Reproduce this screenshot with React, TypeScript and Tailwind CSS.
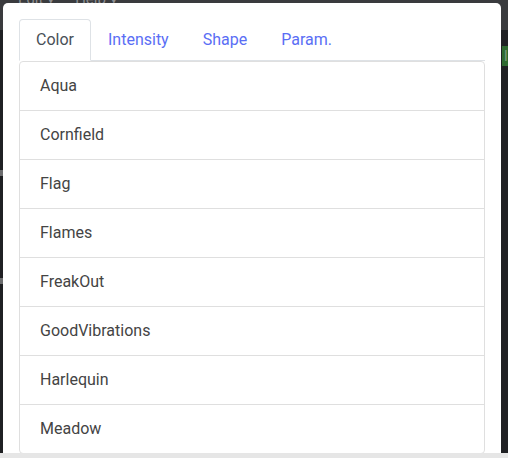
import { useState } from "react";

const tabs = ["Color", "Intensity", "Shape", "Param."];

const palettes = [
  "Aqua",
  "Cornfield",
  "Flag",
  "Flames",
  "FreakOut",
  "GoodVibrations",
  "Harlequin",
  "Meadow",
];

function Backdrop() {
  return (
    <>
      {/* app behind the dialog */}
      <div className="absolute inset-x-0 top-0 h-[30px] bg-[#3a3b3e]" />
      <div className="absolute left-[18px] top-[-12px] flex gap-[20px] text-[15px] text-[#8d8e91]">
        <span>Edit ▾</span>
        <span>Help ▾</span>
      </div>
      <div className="absolute left-[502px] top-[46px] h-[20px] w-[30px] overflow-hidden bg-[#2f6a30] pl-[2px] text-[15px] leading-[20px] text-[#7a9a7a]">
        lo
      </div>
      <div className="absolute left-0 top-[170px] h-[6px] w-[3px] bg-[#6b6c6e]" />
      <div className="absolute left-0 top-[278px] h-[6px] w-[3px] bg-[#6b6c6e]" />
      <div className="absolute inset-x-0 bottom-0 h-[5px] bg-[#e6e6e6]" />
    </>
  );
}

export default function App() {
  const [active, setActive] = useState(0);

  return (
    <div
      className="relative h-[458px] w-[508px] overflow-hidden bg-[#1f2023]"
      style={{ fontFamily: "Roboto, 'Liberation Sans', sans-serif" }}
    >
      <Backdrop />

      {/* dialog */}
      <div className="absolute bottom-[5px] left-[3px] top-[3px] w-[498px] overflow-hidden rounded-t-[5px] bg-white px-4 pt-4">
        <ul className="flex border-b border-[#dee2e6]">
          {tabs.map((t, i) => (
            <li key={t} className="-mb-px">
              <button
                type="button"
                onClick={() => setActive(i)}
                className={
                  i === active
                    ? "block rounded-t-[4px] border border-[#dee2e6] border-b-white bg-white px-4 py-2 text-[16px] leading-6 text-[#495057]"
                    : "block border border-transparent px-4 py-2 text-[16px] leading-6 text-[#5a6ef5]"
                }
              >
                {t}
              </button>
            </li>
          ))}
        </ul>

        <div className="flex flex-col rounded-[4px] border border-[#dfdfdf]">
          {palettes.map((p, i) => (
            <div
              key={p}
              className={
                i === 0
                  ? "px-5 py-3 text-[16px] leading-6 text-[#444]"
                  : "border-t border-[#dfdfdf] px-5 py-3 text-[16px] leading-6 text-[#444]"
              }
            >
              {p}
            </div>
          ))}
        </div>
      </div>
    </div>
  );
}
